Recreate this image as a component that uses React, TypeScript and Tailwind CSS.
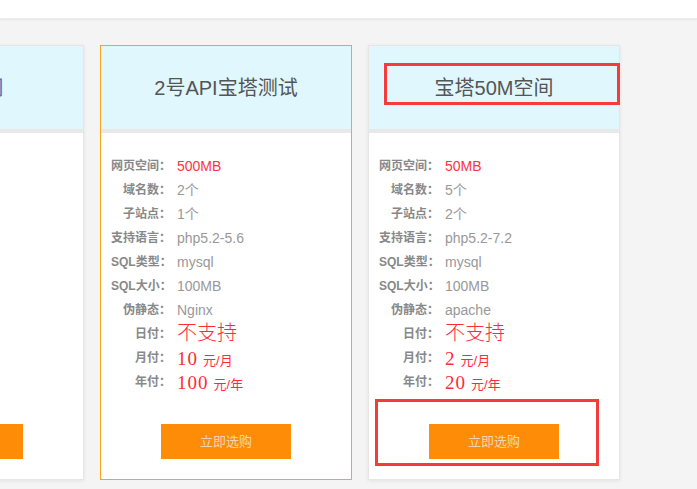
const font = { fontFamily: '"Liberation Sans", "Noto Sans CJK SC", sans-serif' };

type Plan = {
  title: string;
  titleBlue?: boolean;
  space: string;
  domains: string;
  sites: string;
  lang: string;
  sqlType: string;
  sqlSize: string;
  rewrite: string;
  month: string;
  year: string;
  active?: boolean;
  marked?: boolean;
};

const plans: Plan[] = [
  {
    title: '宝塔1空间',
    titleBlue: true,
    space: '100MB',
    domains: '1个',
    sites: '1个',
    lang: 'php5.2-5.6',
    sqlType: 'mysql',
    sqlSize: '50MB',
    rewrite: 'apache',
    month: '1',
    year: '10',
  },
  {
    title: '2号API宝塔测试',
    space: '500MB',
    domains: '2个',
    sites: '1个',
    lang: 'php5.2-5.6',
    sqlType: 'mysql',
    sqlSize: '100MB',
    rewrite: 'Nginx',
    month: '10',
    year: '100',
    active: true,
  },
  {
    title: '宝塔50M空间',
    space: '50MB',
    domains: '5个',
    sites: '2个',
    lang: 'php5.2-7.2',
    sqlType: 'mysql',
    sqlSize: '100MB',
    rewrite: 'apache',
    month: '2',
    year: '20',
    marked: true,
  },
];

const Row = ({ label, children }: { label: string; children: React.ReactNode }) => (
  <div className="flex items-center h-6">
    <span className="w-[60px] text-right text-[12px] font-bold text-[#888] whitespace-nowrap">{label}：</span>
    <span className="ml-[6px] flex items-baseline whitespace-nowrap">{children}</span>
  </div>
);

const Value = ({ children, red }: { children: React.ReactNode; red?: boolean }) => (
  <span className={`text-[14px] ${red ? 'text-[#ff3344]' : 'text-[#999]'}`}>{children}</span>
);

const Price = ({ amount, unit }: { amount: string; unit: string }) => (
  <span className="flex items-baseline text-[#ff2a3a]">
    <span className="text-[19px] leading-none tracking-[1px]" style={{ fontFamily: '"Liberation Serif", serif' }}>
      {amount}
    </span>
    <span className="ml-[5px] text-[13px] leading-none">元/{unit}</span>
  </span>
);

const PlanCard = ({ plan }: { plan: Plan }) => (
  <div
    className={`relative w-[252px] shrink-0 bg-white border ${
      plan.active ? 'border-[#ffa31a]' : 'border-[#e6e6e6] shadow-[0_1px_4px_rgba(0,0,0,0.08)]'
    }`}
  >
    <div className="h-[83px] bg-[#e0f7fd] flex items-center justify-center">
      <h2 className={`text-[20px] whitespace-nowrap ${plan.titleBlue ? 'text-[#4a74b8]' : 'text-[#555]'}`}>
        {plan.title}
      </h2>
    </div>
    <div className="h-[4px] bg-[#e8e8e8]" />

    <div className="pt-[21px] pl-[10px]">
      <Row label="网页空间">
        <Value red>{plan.space}</Value>
      </Row>
      <Row label="域名数">
        <Value>{plan.domains}</Value>
      </Row>
      <Row label="子站点">
        <Value>{plan.sites}</Value>
      </Row>
      <Row label="支持语言">
        <Value>{plan.lang}</Value>
      </Row>
      <Row label="SQL类型">
        <Value>{plan.sqlType}</Value>
      </Row>
      <Row label="SQL大小">
        <Value>{plan.sqlSize}</Value>
      </Row>
      <Row label="伪静态">
        <Value>{plan.rewrite}</Value>
      </Row>
      <Row label="日付">
        <span className="text-[20px] leading-none text-[#ff2a3a] font-light -mt-[3px]">不支持</span>
      </Row>
      <Row label="月付">
        <Price amount={plan.month} unit="月" />
      </Row>
      <Row label="年付">
        <Price amount={plan.year} unit="年" />
      </Row>
    </div>

    <div className="flex justify-center mt-[30px] pb-[20px]">
      <button className="w-[130px] h-[35px] bg-[#ff8c06] text-[13px] text-[#efd6b0]">立即选购</button>
    </div>

    {plan.marked && (
      <>
        <div className="absolute left-[15px] top-[17px] w-[236px] h-[42px] border-[3px] border-[#f53b3b]" />
        <div className="absolute left-[6px] top-[353px] w-[224px] h-[67px] border-[3px] border-[#f53b3b]" />
      </>
    )}
  </div>
);

export default function App() {
  return (
    <div className="w-[697px] h-[489px] overflow-hidden bg-[#f4f4f4]" style={font}>
      <div className="h-[19px] bg-white shadow-[0_1px_2px_rgba(0,0,0,0.06)] border-b border-[#ececec]" />
      <div className="flex gap-4 ml-[-168px] pt-[26px]">
        {plans.map((plan) => (
          <PlanCard key={plan.title} plan={plan} />
        ))}
      </div>
    </div>
  );
}
